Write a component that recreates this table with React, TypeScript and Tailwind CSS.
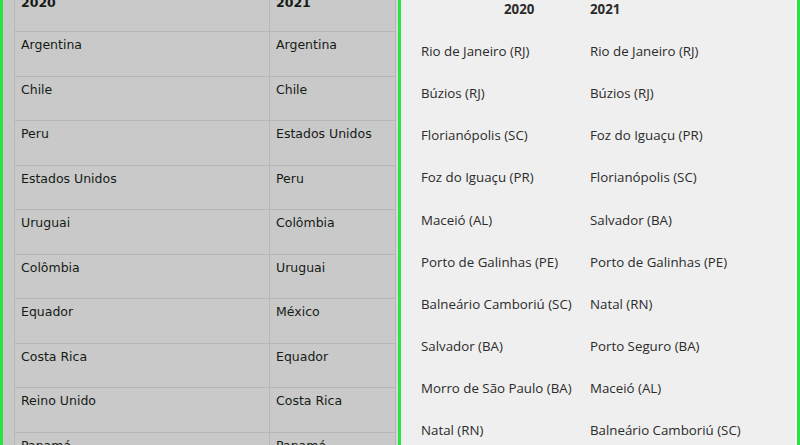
const left2020 = [
  "Argentina",
  "Chile",
  "Peru",
  "Estados Unidos",
  "Uruguai",
  "Colômbia",
  "Equador",
  "Costa Rica",
  "Reino Unido",
  "Panamá",
];

const left2021 = [
  "Argentina",
  "Chile",
  "Estados Unidos",
  "Peru",
  "Colômbia",
  "Uruguai",
  "México",
  "Equador",
  "Costa Rica",
  "Panamá",
];

const right2020 = [
  "Rio de Janeiro (RJ)",
  "Búzios (RJ)",
  "Florianópolis (SC)",
  "Foz do Iguaçu (PR)",
  "Maceió (AL)",
  "Porto de Galinhas (PE)",
  "Balneário Camboriú (SC)",
  "Salvador (BA)",
  "Morro de São Paulo (BA)",
  "Natal (RN)",
];

const right2021 = [
  "Rio de Janeiro (RJ)",
  "Búzios (RJ)",
  "Foz do Iguaçu (PR)",
  "Florianópolis (SC)",
  "Salvador (BA)",
  "Porto de Galinhas (PE)",
  "Natal (RN)",
  "Porto Seguro (BA)",
  "Maceió (AL)",
  "Balneário Camboriú (SC)",
];

export default function App() {
  return (
    <div className="flex h-[445px] w-[800px] overflow-hidden">
      {/* Países */}
      <div className="flex h-full w-[401px] shrink-0 border-x-[3px] border-[#27e544] bg-[#c9c9c9] pl-[11px]">
        <div
          className="mt-[-12.5px] w-[382px] self-start border-l border-r border-[#b7b7b7] text-[12.5px] leading-4 text-[#151b15]"
          style={{ fontFamily: '"DejaVu Sans", Verdana, sans-serif' }}
        >
          <div className="grid grid-cols-[255px_126px] font-bold">
            <div className="h-[44.5px] border-b border-r border-[#b7b7b7] pl-[6px] pt-[7px]">2020</div>
            <div className="h-[44.5px] border-b border-[#b7b7b7] pl-[6px] pt-[7px]">2021</div>
          </div>
          {left2020.map((c, i) => (
            <div key={i} className="grid grid-cols-[255px_126px]">
              <div className="h-[44.5px] border-b border-r border-[#b7b7b7] pl-[6px] pt-[5px]">{c}</div>
              <div className="h-[44.5px] border-b border-[#b7b7b7] pl-[6px] pt-[5px]">{left2021[i]}</div>
            </div>
          ))}
        </div>
        <div className="ml-auto w-[2px] bg-[#d6d6d6]" />
      </div>

      {/* Destinos nacionais */}
      <div className="flex h-full flex-1 border-r-[3px] border-[#27e544] bg-[#efefef]">
        <div
          className="mt-[-11px] flex-1 self-start pl-[20px] text-[13.3px] text-[#2b2b2b]"
          style={{ fontFamily: '"Open Sans", sans-serif' }}
        >
          <div className="grid h-[42.1px] grid-cols-[169px_1fr] items-center font-bold">
            <div className="pl-[83px]">2020</div>
            <div>2021</div>
          </div>
          {right2020.map((c, i) => (
            <div key={i} className="grid h-[42.1px] grid-cols-[169px_1fr] items-center">
              <div>{c}</div>
              <div>{right2021[i]}</div>
            </div>
          ))}
        </div>
        <div className="w-[2px] bg-[#f9f9f9]" />
      </div>
    </div>
  );
}
